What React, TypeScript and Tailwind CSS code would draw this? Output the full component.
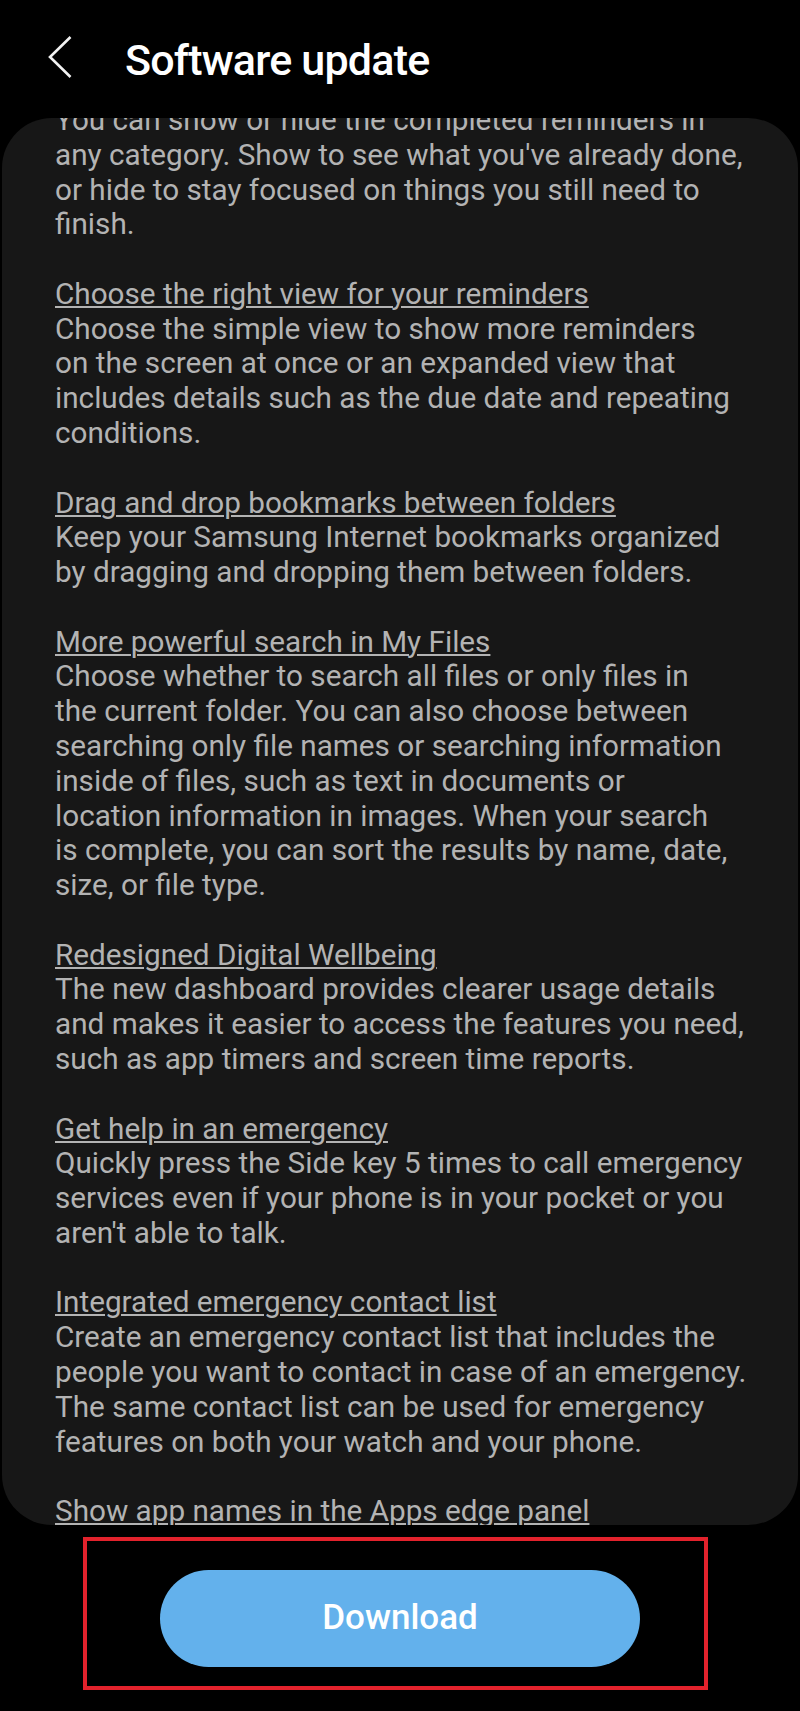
import React from 'react';

type Section = { title?: string; lines: string[] };

const sections: Section[] = [
  {
    lines: [
      'You can show or hide the completed reminders in',
      "any category. Show to see what you've already done,",
      'or hide to stay focused on things you still need to',
      'finish.',
    ],
  },
  {
    title: 'Choose the right view for your reminders',
    lines: [
      'Choose the simple view to show more reminders',
      'on the screen at once or an expanded view that',
      'includes details such as the due date and repeating',
      'conditions.',
    ],
  },
  {
    title: 'Drag and drop bookmarks between folders',
    lines: [
      'Keep your Samsung Internet bookmarks organized',
      'by dragging and dropping them between folders.',
    ],
  },
  {
    title: 'More powerful search in My Files',
    lines: [
      'Choose whether to search all files or only files in',
      'the current folder. You can also choose between',
      'searching only file names or searching information',
      'inside of files, such as text in documents or',
      'location information in images. When your search',
      'is complete, you can sort the results by name, date,',
      'size, or file type.',
    ],
  },
  {
    title: 'Redesigned Digital Wellbeing',
    lines: [
      'The new dashboard provides clearer usage details',
      'and makes it easier to access the features you need,',
      'such as app timers and screen time reports.',
    ],
  },
  {
    title: 'Get help in an emergency',
    lines: [
      'Quickly press the Side key 5 times to call emergency',
      'services even if your phone is in your pocket or you',
      "aren't able to talk.",
    ],
  },
  {
    title: 'Integrated emergency contact list',
    lines: [
      'Create an emergency contact list that includes the',
      'people you want to contact in case of an emergency.',
      'The same contact list can be used for emergency',
      'features on both your watch and your phone.',
    ],
  },
  {
    title: 'Show app names in the Apps edge panel',
    lines: [],
  },
];

export default function App() {
  return (
    <div className="w-[800px] h-[1711px] bg-black overflow-hidden font-['Roboto',sans-serif]">
      {/* header */}
      <div className="h-[118px] flex items-start pt-[36px]">
        <svg className="ml-[48px] w-[24px] h-[42px]" viewBox="0 0 24 42" fill="none">
          <path d="M22.5 1 L2 21 L22.5 41" stroke="#f2f2f2" strokeWidth="2.6" strokeLinejoin="miter" />
        </svg>
        <h1 className="ml-[53px] mt-[3px] text-[43px] leading-[43px] font-medium tracking-[-0.8px] text-white">
          Software update
        </h1>
      </div>

      {/* release notes card */}
      <div className="mx-[2px] h-[1407px] rounded-[50px] bg-[#171717] overflow-hidden">
        <div className="-mt-[15px] pl-[53px] text-[29.7px] leading-[34.78px] text-[#b3b3b3]">
          {sections.map((s, i) => (
            <div key={i} className={i > 0 ? 'mt-[34.78px]' : ''}>
              {s.title && (
                <div className="whitespace-nowrap underline decoration-2 underline-offset-[2px]">{s.title}</div>
              )}
              {s.lines.map((l, j) => (
                <div key={j} className="whitespace-nowrap">
                  {l}
                </div>
              ))}
            </div>
          ))}
        </div>
      </div>

      {/* download */}
      <div className="mt-[12px] ml-[83px] w-[625px] h-[153px] border-4 border-[#e2222c]">
        <button className="mt-[29px] ml-[73px] w-[480px] h-[97px] rounded-full bg-[#63b1ec] text-white text-[35px] font-medium flex items-center justify-center">
          Download
        </button>
      </div>
    </div>
  );
}
